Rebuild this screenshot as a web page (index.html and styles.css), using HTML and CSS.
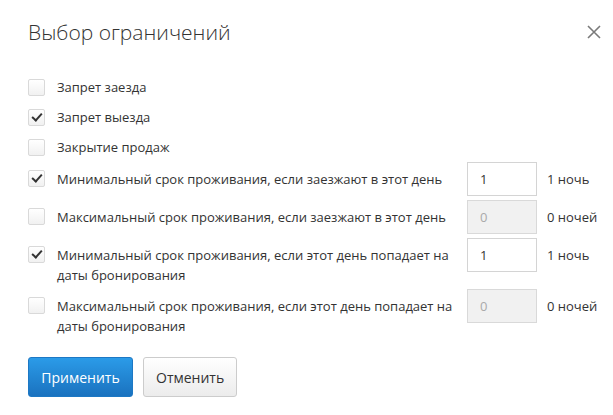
FILE: index.html
```html
<!DOCTYPE html>
<html lang="ru">
<head>
	<meta charset="UTF-8">
	<title>Выбор ограничений</title>
	<link rel="stylesheet" href="styles.css">
</head>
<body>
	<div class="modal">
		<div class="modal-header">
			<h2 class="modal-title">Выбор ограничений</h2>
			<button class="close" type="button">
				<svg width="14" height="14" viewBox="0 0 14 14"><path d="M1 1L13 13M13 1L1 13" stroke="#7a7a7a" stroke-width="1.6" fill="none"/></svg>
			</button>
		</div>
		<div class="modal-body">
			<div class="row">
				<span class="box"></span>
				<span class="text">Запрет заезда</span>
			</div>
			<div class="row">
				<span class="box checked"></span>
				<span class="text">Запрет выезда</span>
			</div>
			<div class="row">
				<span class="box"></span>
				<span class="text">Закрытие продаж</span>
			</div>

			<!-- строки с количеством ночей -->
			<div class="row row-field">
				<span class="box checked"></span>
				<span class="text">Минимальный срок проживания, если заезжают в этот день</span>
				<input class="field" type="text" value="1">
				<span class="unit">1 ночь</span>
			</div>
			<div class="row row-field">
				<span class="box"></span>
				<span class="text">Максимальный срок проживания, если заезжают в этот день</span>
				<input class="field" type="text" value="0" disabled>
				<span class="unit">0 ночей</span>
			</div>
			<div class="row row-field">
				<span class="box checked"></span>
				<span class="text">Минимальный срок проживания, если этот день попадает на даты бронирования</span>
				<input class="field" type="text" value="1">
				<span class="unit">1 ночь</span>
			</div>
			<div class="row row-field">
				<span class="box"></span>
				<span class="text">Максимальный срок проживания, если этот день попадает на даты бронирования</span>
				<input class="field" type="text" value="0" disabled>
				<span class="unit">0 ночей</span>
			</div>
		</div>
		<div class="modal-footer">
			<button class="btn btn-primary" type="button">Применить</button>
			<button class="btn" type="button">Отменить</button>
		</div>
	</div>
</body>
</html>
```

FILE: styles.css
```css
body{margin:0;background:#fff;font-family:"Open Sans","Liberation Sans",sans-serif;color:#333;}
.modal{width:613px;height:415px;padding:0 0 0 28px;box-sizing:border-box;}

.modal-header{display:flex;align-items:center;justify-content:space-between;height:72px;}
.modal-title{margin:0;font-size:21px;font-weight:300;color:#333;line-height:30px;padding-bottom:8px;}
.close{border:0;background:none;padding:0;margin:0 12px 8px 0;width:14px;height:14px;display:flex;}

.row{display:flex;align-items:center;height:30px;font-size:13px;line-height:20px;}
.row .text{width:398px;}
.row-field{align-items:flex-start;height:auto;min-height:34px;margin-bottom:4px;}
.row-field .box{margin-top:8px;}
.row-field .text{padding-top:7px;}

.box{position:relative;width:15px;height:15px;border:1px solid #d9d9d9;border-radius:2px;background:linear-gradient(#fff,#f1f1f1);margin-right:12px;flex:none;}
.box.checked:after{content:"";position:absolute;left:3px;top:3px;width:8px;height:4px;border-left:2.5px solid #333;border-bottom:2.5px solid #333;transform:rotate(-48deg);}

.field{width:70px;height:34px;box-sizing:border-box;margin-left:12px;padding:0 12px;border:1px solid #d4d4d4;border-radius:0;font:13px "Open Sans","Liberation Sans",sans-serif;color:#333;background:#fff;flex:none;}
.field:disabled{background:#f1f1f1;color:#aaa;border-color:#d9d9d9;}
.unit{margin-left:10px;padding-top:7px;white-space:nowrap;}

.modal-footer{display:flex;gap:10px;margin-top:21px;}
.btn{height:40px;padding:0 12px;border:1px solid #ccc;border-radius:3px;background:linear-gradient(#fff,#ececec);font:14px "Open Sans","Liberation Sans",sans-serif;color:#333;}
.btn-primary{width:105px;border-color:#1d78c4;background:linear-gradient(#2b9be8,#1a72bf);color:#fff;}
.btn:not(.btn-primary){width:94px;}
```
